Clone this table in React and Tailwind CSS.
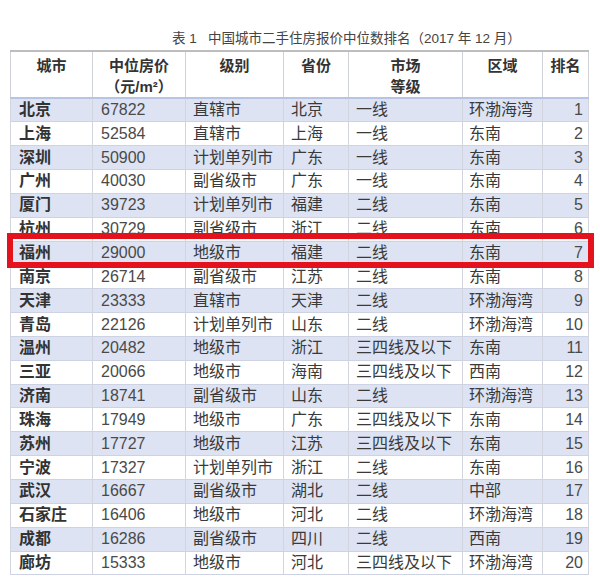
import React from "react";

const rows = [
  ["北京", "67822", "直辖市", "北京", "一线", "环渤海湾", 1],
  ["上海", "52584", "直辖市", "上海", "一线", "东南", 2],
  ["深圳", "50900", "计划单列市", "广东", "一线", "东南", 3],
  ["广州", "40030", "副省级市", "广东", "一线", "东南", 4],
  ["厦门", "39723", "计划单列市", "福建", "二线", "东南", 5],
  ["杭州", "30729", "副省级市", "浙江", "二线", "东南", 6],
  ["福州", "29000", "地级市", "福建", "二线", "东南", 7],
  ["南京", "26714", "副省级市", "江苏", "二线", "东南", 8],
  ["天津", "23333", "直辖市", "天津", "二线", "环渤海湾", 9],
  ["青岛", "22126", "计划单列市", "山东", "二线", "环渤海湾", 10],
  ["温州", "20482", "地级市", "浙江", "三四线及以下", "东南", 11],
  ["三亚", "20066", "地级市", "海南", "三四线及以下", "西南", 12],
  ["济南", "18741", "副省级市", "山东", "二线", "环渤海湾", 13],
  ["珠海", "17949", "地级市", "广东", "三四线及以下", "东南", 14],
  ["苏州", "17727", "地级市", "江苏", "三四线及以下", "东南", 15],
  ["宁波", "17327", "计划单列市", "浙江", "二线", "东南", 16],
  ["武汉", "16667", "副省级市", "湖北", "二线", "中部", 17],
  ["石家庄", "16406", "地级市", "河北", "二线", "环渤海湾", 18],
  ["成都", "16286", "副省级市", "四川", "二线", "西南", 19],
  ["廊坊", "15333", "地级市", "河北", "三四线及以下", "环渤海湾", 20],
];

export default function App() {
  return (
    <div
      className="relative w-[600px] h-[579px] bg-white overflow-hidden text-[#3a3a3a]"
      style={{ fontFamily: '"Liberation Sans", "Noto Sans CJK SC", sans-serif' }}
    >
      {/* caption */}
      <div className="pt-[30px] pl-[172px] h-[50px] text-[13.5px] leading-[17px] text-[#444] whitespace-nowrap">
        表 1&nbsp;&nbsp;&nbsp;中国城市二手住房报价中位数排名（2017 年 12 月）
      </div>

      <table className="ml-[10px] border-collapse table-fixed w-[578px] text-[16px]">
        <colgroup>
          <col className="w-[82px]" />
          <col className="w-[93px]" />
          <col className="w-[98px]" />
          <col className="w-[65px]" />
          <col className="w-[114px]" />
          <col className="w-[80px]" />
          <col className="w-[46px]" />
        </colgroup>
        <thead>
          <tr className="h-[46px] border-t-2 border-[#bdbdbd] border-b-2 border-b-[#b8c4e4] align-top font-bold text-[15px] leading-[21px] text-[#333]">
            <th className="border-x border-[#cfd1d8] pt-[3px] font-bold">城市</th>
            <th className="border-x border-[#cfd1d8] pt-[3px] font-bold">
              中位房价
              <br />
              （元/m²）
            </th>
            <th className="border-x border-[#cfd1d8] pt-[3px] font-bold">级别</th>
            <th className="border-x border-[#cfd1d8] pt-[3px] font-bold">省份</th>
            <th className="border-x border-[#cfd1d8] pt-[3px] font-bold">
              市场
              <br />
              等级
            </th>
            <th className="border-x border-[#cfd1d8] pt-[3px] font-bold">区域</th>
            <th className="border-x border-[#cfd1d8] pt-[3px] font-bold">排名</th>
          </tr>
        </thead>
        <tbody>
          {rows.map((r, i) => (
            <tr
              key={r[0]}
              className={`h-[23.85px] leading-[20px] border-b border-[#cdd3e3] ${
                i % 2 === 0 ? "bg-[#dde3f3]" : "bg-white"
              }`}
            >
              <td className="border-x border-[#d2d5de] pl-[8px] font-bold text-[#333]">{r[0]}</td>
              <td className="border-x border-[#d2d5de] pl-[8px] text-[#4a4a4a]">{r[1]}</td>
              <td className="border-x border-[#d2d5de] pl-[7px] whitespace-nowrap">{r[2]}</td>
              <td className="border-x border-[#d2d5de] pl-[7px]">{r[3]}</td>
              <td className="border-x border-[#d2d5de] pl-[7px] whitespace-nowrap">{r[4]}</td>
              <td className="border-x border-[#d2d5de] pl-[6px] whitespace-nowrap">{r[5]}</td>
              <td className="border-x border-[#d2d5de] pr-[5px] text-right text-[#4a4a4a]">{r[6]}</td>
            </tr>
          ))}
        </tbody>
      </table>

      {/* highlight around 福州 */}
      <div className="absolute left-[7px] top-[233px] w-[587px] h-[35px] border-[6px] border-[#e3121c] pointer-events-none" />
    </div>
  );
}
